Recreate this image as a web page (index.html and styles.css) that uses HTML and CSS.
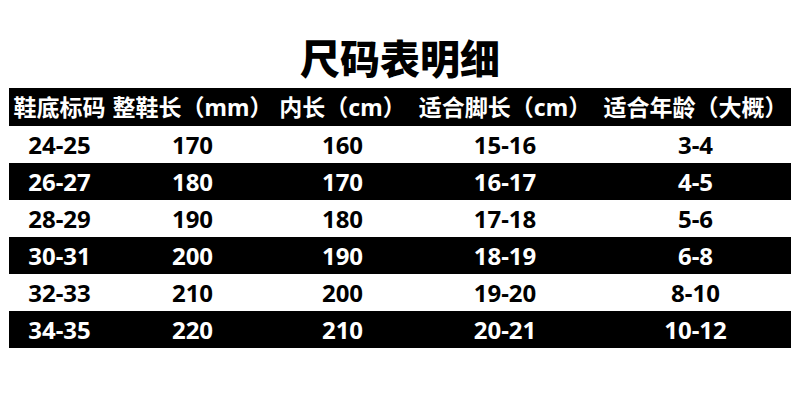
FILE: index.html
```html
<!DOCTYPE html>
<html lang="zh-CN">
<head>
<meta charset="utf-8">
<title>尺码表明细</title>
<link rel="stylesheet" href="styles.css">
</head>
<body>
<div class="page">
  <h1 class="title">尺码表明细</h1>
  <div class="table">
    <div class="row head">
      <div class="cell">鞋底标码</div>
      <div class="cell">整鞋长（mm）</div>
      <div class="cell">内长（cm）</div>
      <div class="cell">适合脚长（cm）</div>
      <div class="cell">适合年龄（大概）</div>
    </div>
    <div class="row light">
      <div class="cell">24-25</div><div class="cell">170</div><div class="cell">160</div><div class="cell">15-16</div><div class="cell">3-4</div>
    </div>
    <div class="row dark">
      <div class="cell">26-27</div><div class="cell">180</div><div class="cell">170</div><div class="cell">16-17</div><div class="cell">4-5</div>
    </div>
    <div class="row light">
      <div class="cell">28-29</div><div class="cell">190</div><div class="cell">180</div><div class="cell">17-18</div><div class="cell">5-6</div>
    </div>
    <div class="row dark">
      <div class="cell">30-31</div><div class="cell">200</div><div class="cell">190</div><div class="cell">18-19</div><div class="cell">6-8</div>
    </div>
    <div class="row light">
      <div class="cell">32-33</div><div class="cell">210</div><div class="cell">200</div><div class="cell">19-20</div><div class="cell">8-10</div>
    </div>
    <div class="row dark">
      <div class="cell">34-35</div><div class="cell">220</div><div class="cell">210</div><div class="cell">20-21</div><div class="cell">10-12</div>
    </div>
  </div>
</div>
</body>
</html>
```

FILE: styles.css
```css
html, body {
  margin: 0;
  padding: 0;
  background: #ffffff;
}

body {
  width: 800px;
  height: 400px;
  overflow: hidden;
  font-family: "Noto Sans", "Noto Sans CJK SC", sans-serif;
  color: #000;
}

.page {
  display: flex;
  flex-direction: column;
}

.title {
  margin: 0;
  height: 88px;
  box-sizing: border-box;
  padding-top: 37px;
  line-height: 40px;
  font-size: 40px;
  font-weight: 900;
  text-align: center;
  font-family: "Noto Sans CJK SC", sans-serif;
}

.table {
  margin: 0 9px;
  display: flex;
  flex-direction: column;
}

.row {
  display: grid;
  grid-template-columns: 101px 165px 135px 190px 191px;
  height: 37px;
  align-items: center;
}

.cell {
  text-align: center;
  white-space: nowrap;
  font-weight: 700;
  font-size: 24px;
  line-height: 37px;
}

.head {
  height: 38px;
  background: #000;
  color: #fff;
}

.head .cell {
  font-size: 23px;
  line-height: 38px;
}

.dark {
  background: #000;
  color: #fff;
}

.light {
  background: #fff;
  color: #000;
}
```
